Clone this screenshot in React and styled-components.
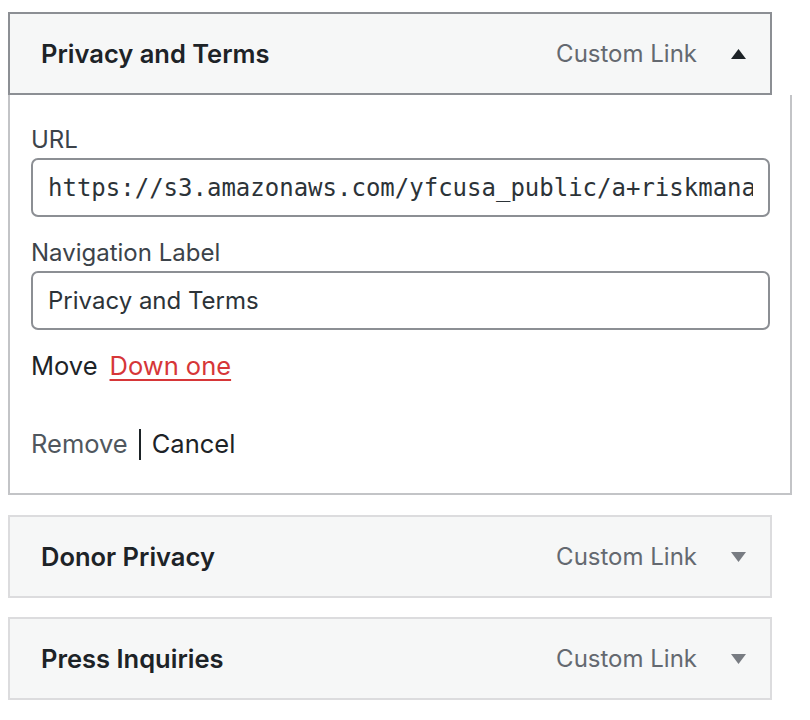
import React from 'react';
import styled, { createGlobalStyle } from 'styled-components';

const GlobalStyle = createGlobalStyle`
  body {
    margin: 0;
    background: #fff;
    font-family: Inter, "Noto Sans", "Liberation Sans", sans-serif;
    color: #1d2327;
  }
`;

const MenuList = styled.div`
  padding: 12px 0 0 8px;
  width: 784px;
`;

const MenuItem = styled.div`
  margin-bottom: ${p => (p.$open ? '20px' : '19px')};
`;

const Handle = styled.div`
  box-sizing: border-box;
  width: 764px;
  height: 83px;
  display: flex;
  align-items: center;
  padding: 0 24px 0 31px;
  background: #f6f7f7;
  border: 2px solid ${p => (p.$open ? '#8c8f94' : '#dcdcde')};
`;

const Title = styled.span`
  flex: 1;
  font-size: 25.5px;
  font-weight: 600;
  color: #1d2327;
`;

const ItemType = styled.span`
  font-size: 24px;
  color: #646970;
  margin-right: 34px;
`;

const Toggle = styled.svg`
  width: 15px;
  height: 10px;
  fill: ${p => (p.$open ? '#1d2327' : '#787c82')};
`;

const Settings = styled.div`
  box-sizing: border-box;
  width: 784px;
  padding: 28px 20px 32px 21px;
  border: 2px solid #c3c4c7;
  border-top: none;
`;

const Field = styled.div`
  margin-bottom: 19px;
`;

const Label = styled.label`
  display: block;
  font-size: 24px;
  line-height: 34px;
  color: #3c434a;
  margin-bottom: 1px;
`;

const Input = styled.input`
  box-sizing: border-box;
  width: 100%;
  height: 59px;
  padding: 0 15px;
  border: 2px solid #8c8f94;
  border-radius: 7px;
  background: #fff;
  color: #2c3338;
  font-size: 24px;
  font-family: ${p => (p.$mono ? '"DejaVu Sans Mono", "Liberation Mono", monospace' : 'Inter, "Noto Sans", sans-serif')};
  outline: none;
`;

const MoveRow = styled.div`
  display: flex;
  gap: 12px;
  font-size: 25.5px;
  line-height: 34px;
  color: #1d2327;
  margin-bottom: 44px;
`;

const MoveLink = styled.a`
  color: #d63638;
  text-decoration: underline;
  text-underline-offset: 4px;
  text-decoration-thickness: 2px;
`;

const Actions = styled.div`
  display: flex;
  align-items: center;
  font-size: 25.5px;
  line-height: 34px;
`;

const ActionLink = styled.a`
  color: ${p => (p.$muted ? '#50575e' : '#1d2327')};
  text-decoration: none;
`;

const Sep = styled.span`
  width: 2px;
  height: 31px;
  background: #1d2327;
  margin: 0 11px 0 11px;
`;

const Arrow = ({ open }) => (
  <Toggle $open={open} viewBox="0 0 15 10">
    {open ? <polygon points="7.5,0 15,10 0,10" /> : <polygon points="0,0 15,0 7.5,10" />}
  </Toggle>
);

const items = [
  { title: 'Donor Privacy', type: 'Custom Link' },
  { title: 'Press Inquiries', type: 'Custom Link' },
];

export default function App() {
  return (
    <>
      <GlobalStyle />
      <MenuList>
        <MenuItem $open>
          <Handle $open>
            <Title>Privacy and Terms</Title>
            <ItemType>Custom Link</ItemType>
            <Arrow open />
          </Handle>
          <Settings>
            <Field>
              <Label>URL</Label>
              <Input $mono readOnly value="https://s3.amazonaws.com/yfcusa_public/a+riskmanagement+policy.pdf" />
            </Field>
            <Field>
              <Label>Navigation Label</Label>
              <Input readOnly value="Privacy and Terms" />
            </Field>
            <MoveRow>
              <span>Move</span>
              <MoveLink href="#">Down one</MoveLink>
            </MoveRow>
            <Actions>
              <ActionLink $muted href="#">Remove</ActionLink>
              <Sep />
              <ActionLink href="#">Cancel</ActionLink>
            </Actions>
          </Settings>
        </MenuItem>
        {items.map(item => (
          <MenuItem key={item.title}>
            <Handle>
              <Title>{item.title}</Title>
              <ItemType>{item.type}</ItemType>
              <Arrow />
            </Handle>
          </MenuItem>
        ))}
      </MenuList>
    </>
  );
}
